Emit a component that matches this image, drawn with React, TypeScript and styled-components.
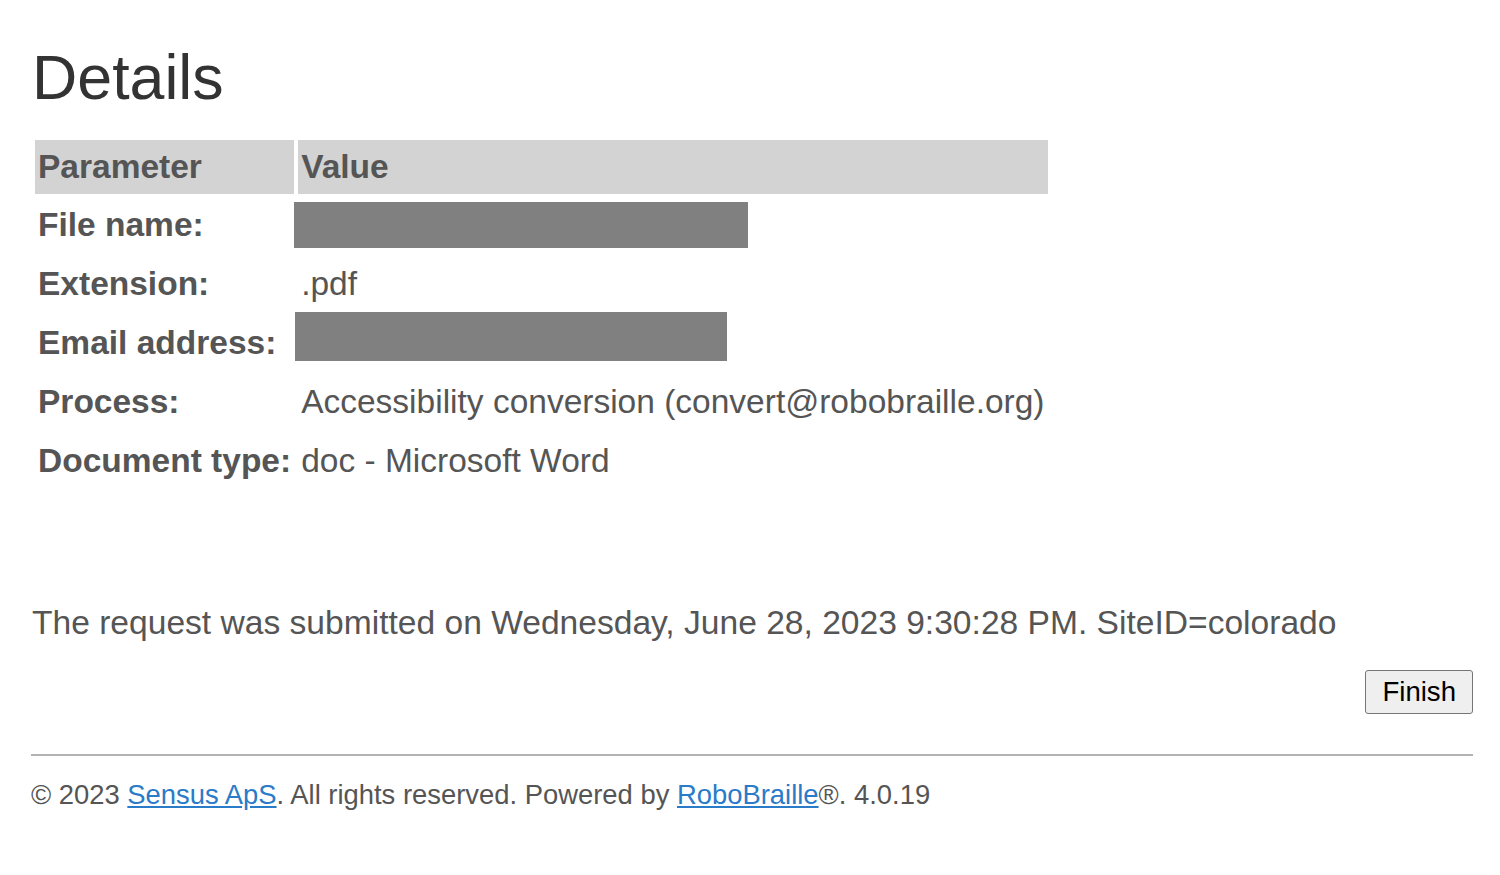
import React from "react";
import styled, { createGlobalStyle } from "styled-components";

const GlobalStyle = createGlobalStyle`
  html, body {
    margin: 0;
    padding: 0;
    background: #ffffff;
  }
  body {
    font-family: "Liberation Sans", Arial, sans-serif;
    color: #555555;
  }
`;

const Page = styled.div`
  padding: 42px 27px 40px 31px;
`;

const Title = styled.h1`
  margin: 0 0 23px 1px;
  font-size: 62.7px;
  font-weight: 400;
  line-height: 71px;
  color: #333333;
`;

const DetailsTable = styled.table`
  border-spacing: 4px;
  font-size: 33.5px;
  line-height: 46px;
`;

const HeadCell = styled.th`
  background: #d3d3d3;
  text-align: left;
  font-weight: 700;
  padding: 4px 3px;
`;

const LabelCell = styled.td`
  font-weight: 700;
  padding: 4px 3px 5px 3px;
  white-space: nowrap;
`;

const ValueCell = styled.td`
  padding: 4px 3px 5px 3px;
  white-space: nowrap;
`;

const Redacted = styled.span<{ $width: number; $height: number; $shift: number; $left: number }>`
  display: block;
  width: ${(p) => p.$width}px;
  height: ${(p) => p.$height}px;
  margin-top: ${(p) => p.$shift}px;
  margin-bottom: ${(p) => 46 - p.$height - p.$shift}px;
  margin-left: ${(p) => p.$left}px;
  background: #808080;
`;

const Note = styled.p`
  margin: 111px 0 0 1px;
  font-size: 33.6px;
  line-height: 38px;
`;

const Actions = styled.div`
  display: flex;
  justify-content: flex-end;
  margin-top: 28px;
`;

const FinishButton = styled.button`
  font-family: "Liberation Sans", Arial, sans-serif;
  font-size: 27.6px;
  color: #000000;
  background: #efefef;
  border: 1px solid #767676;
  border-radius: 3px;
  height: 44px;
  padding: 0 16px;
`;

const Rule = styled.hr`
  margin: 40px 0 0 0;
  border: 0;
  border-top: 2px solid #b4b4b4;
`;

const Footer = styled.footer`
  margin-top: 22px;
  font-size: 27.4px;
  line-height: 34px;
`;

const FooterLink = styled.a`
  color: #2a7bc8;
  text-decoration: underline;
`;

type Row = {
  label: string;
  value?: string;
  redact?: { width: number; height: number; shift: number; left: number };
};

const rows: Row[] = [
  { label: "File name:", redact: { width: 454, height: 46, shift: 0, left: -7 } },
  { label: "Extension:", value: ".pdf" },
  { label: "Email address:", redact: { width: 432, height: 49, shift: -8, left: -6 } },
  { label: "Process:", value: "Accessibility conversion (convert@robobraille.org)" },
  { label: "Document type:", value: "doc - Microsoft Word" },
];

export default function App() {
  return (
    <>
      <GlobalStyle />
      <Page>
        <Title>Details</Title>
        <DetailsTable>
          <thead>
            <tr>
              <HeadCell>Parameter</HeadCell>
              <HeadCell>Value</HeadCell>
            </tr>
          </thead>
          <tbody>
            {rows.map((r) => (
              <tr key={r.label}>
                <LabelCell>{r.label}</LabelCell>
                <ValueCell>
                  {r.redact ? (
                    <Redacted
                      $width={r.redact.width}
                      $height={r.redact.height}
                      $shift={r.redact.shift}
                      $left={r.redact.left}
                    />
                  ) : (
                    r.value
                  )}
                </ValueCell>
              </tr>
            ))}
          </tbody>
        </DetailsTable>
        <Note>
          The request was submitted on Wednesday, June 28, 2023 9:30:28 PM. SiteID=colorado
        </Note>
        <Actions>
          <FinishButton type="button">Finish</FinishButton>
        </Actions>
        <Rule />
        <Footer>
          © 2023 <FooterLink href="#">Sensus ApS</FooterLink>. All rights reserved. Powered by{" "}
          <FooterLink href="#">RoboBraille</FooterLink>®. 4.0.19
        </Footer>
      </Page>
    </>
  );
}
